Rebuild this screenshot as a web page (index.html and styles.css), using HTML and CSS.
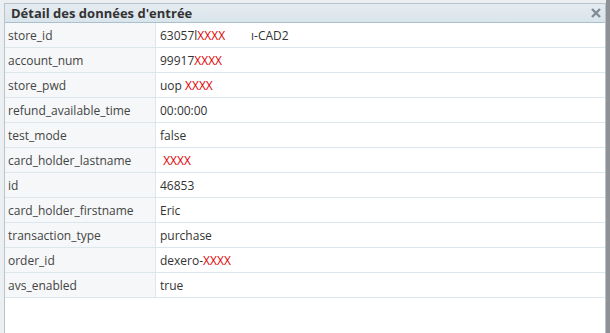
FILE: index.html
```html
<!DOCTYPE html>
<html lang="fr">
<head>
    <meta charset="UTF-8">
    <title>Détail des données d'entrée</title>
    <link rel="stylesheet" href="styles.css">
</head>
<body>
    <div class="page">
        <div class="dialog">
            <div class="dialog-header">
                <span class="dialog-title">Détail des données d'entrée</span>
                <span class="dialog-close">
                    <svg width="10" height="10" viewBox="0 0 10 10"><path d="M1 1 L9 9 M9 1 L1 9" stroke="#7f8c96" stroke-width="2.4"/></svg>
                </span>
            </div>
            <table class="details">
                <tr><td class="key">store_id</td><td class="val">63057l<span class="hidden">XXXX</span><span class="gap"></span>ı-CAD2</td></tr>
                <tr><td class="key">account_num</td><td class="val">99917<span class="hidden">XXXX</span></td></tr>
                <tr><td class="key">store_pwd</td><td class="val">uop <span class="hidden">XXXX</span></td></tr>
                <tr><td class="key">refund_available_time</td><td class="val">00:00:00</td></tr>
                <tr><td class="key">test_mode</td><td class="val">false</td></tr>
                <tr><td class="key">card_holder_lastname</td><td class="val">&nbsp;<span class="hidden">XXXX</span></td></tr>
                <tr><td class="key">id</td><td class="val">46853</td></tr>
                <tr><td class="key">card_holder_firstname</td><td class="val">Eric</td></tr>
                <tr><td class="key">transaction_type</td><td class="val">purchase</td></tr>
                <tr><td class="key">order_id</td><td class="val">dexero-<span class="hidden">XXXX</span></td></tr>
                <tr><td class="key">avs_enabled</td><td class="val">true</td></tr>
            </table>
        </div>
        <div class="side-strip"></div>
    </div>
</body>
</html>
```

FILE: styles.css
```css
body {
    margin: 0;
    padding: 0;
    font-family: "Open Sans", Arial, sans-serif;
    font-size: 12px;
    background-color: #eceff2;
    height: 333px;
    overflow: hidden;
}

.page {
    display: flex;
    height: 100%;
    padding: 3px 0 0 4px;
    box-sizing: border-box;
}

.dialog {
    flex: 1;
    background-color: #fff;
    border: 1px solid #b9c3cb;
    border-bottom: none;
}

.side-strip {
    width: 4px;
    background-color: #8e9296;
    margin-top: -3px;
}

.dialog-header {
    display: flex;
    justify-content: space-between;
    align-items: center;
    height: 18px;
    padding: 0 4px 0 6px;
    background: linear-gradient(#e5ecf1, #d9e4eb);
    border-bottom: 1px solid #a8c0d0;
}

.dialog-title {
    font-weight: bold;
    font-size: 13px;
    color: #333;
}

.dialog-close {
    display: flex;
}

.details {
    width: 100%;
    border-collapse: collapse;
}

.details td {
    height: 24px;
    padding: 0;
    border-bottom: 1px solid #dce6eb;
    color: #333;
    white-space: nowrap;
}

.details .key {
    width: 147px;
    padding-left: 3px;
    background-color: #f5f7f8;
    border-right: 1px solid #dce6eb;
    color: #444;
}

.details .val {
    padding-left: 4px;
}

.hidden {
    color: #e00000;
}

.gap {
    display: inline-block;
    width: 26px;
}
```
